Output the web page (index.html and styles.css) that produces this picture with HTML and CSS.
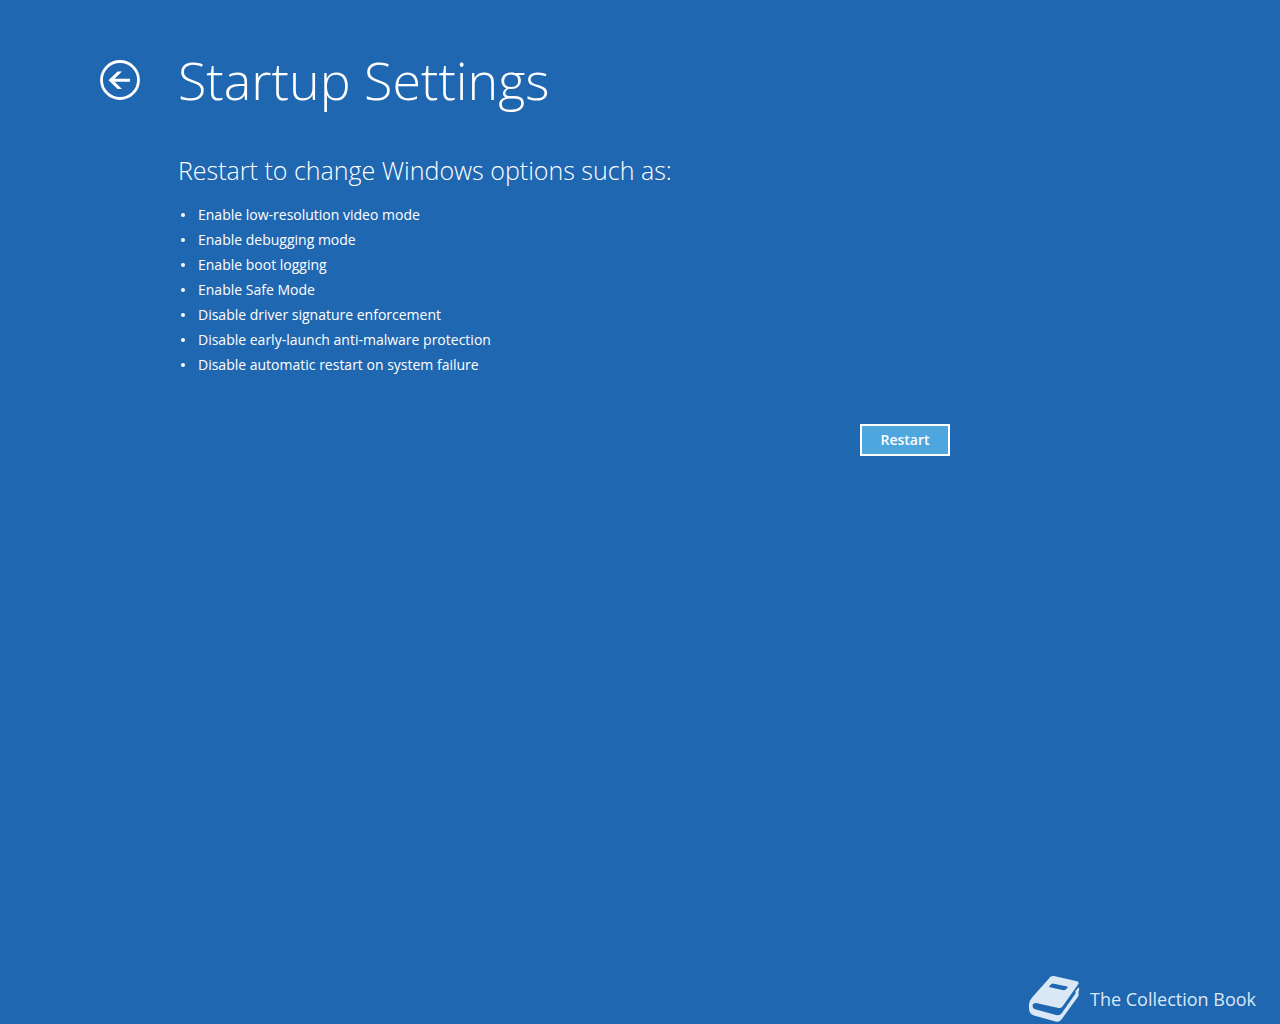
FILE: index.html
```
<!DOCTYPE html>
<html lang="en">
<head>
    <meta charset="UTF-8">
    <meta name="viewport" content="width=device-width, initial-scale=1.0">
    <title>Startup Settings</title>
    <link rel="stylesheet" href="styles.css">
</head>
<body>
    <main class="screen">
        <button class="back-btn" type="button" aria-label="Back">
            <svg viewBox="0 0 40 40" width="40" height="40" aria-hidden="true">
                <circle cx="20" cy="20" r="18.5" fill="none" stroke="#fff" stroke-width="2.8"/>
                <path d="M8.5 20.2 17.6 11.4H22L14.600 18.700H30V21.700H14.600L22 29H17.6Z" fill="#fff"/>
            </svg>
        </button>
        <h1 class="title">Startup Settings</h1>
        <div class="content">
            <h2 class="subtitle">Restart to change Windows options such as:</h2>
            <ul class="options">
                <li>Enable low-resolution video mode</li>
                <li>Enable debugging mode</li>
                <li>Enable boot logging</li>
                <li>Enable Safe Mode</li>
                <li>Disable driver signature enforcement</li>
                <li>Disable early-launch anti-malware protection</li>
                <li>Disable automatic restart on system failure</li>
            </ul>
            <div class="actions">
                <button class="restart-btn" type="button">Restart</button>
            </div>
        </div>
    </main>
    <footer class="brand">
        <svg viewBox="0 0 52 48" width="52" height="48" aria-hidden="true">
            <path fill="#dae7f5" fill-rule="evenodd" d="M22.5 1.8Q24 .6 26 1.100L49 6.300Q51.500 7 50 9.500L34.500 31.500Q33 33.500 30.500 33L8 28Q4.500 28 4.600 31Q4.700 33.500 8 34.500L28 40Q31.500 41 33.500 38.500L47.500 18.500V16L50.500 12.500Q52 14 50.500 16.500V21L33.500 44.500Q31 47.500 27.500 46.500L6 40.500Q1 39 1 33V29.500Q1 26 4 22.500ZM23.500 9 21.300 11Q20.800 12 22 12.300L35.500 15.300Q37 15.500 38 14.300L39.500 12.800Q40.200 11.800 39 11.500L26 8.700Q24.500 8.300 23.500 9Z"/>
        </svg>
        <span>The Collection Book</span>
    </footer>
</body>
</html>
```
FILE: styles.css
```
* {
    box-sizing: border-box;
}

body {
    display: flex;
    flex-direction: column;
    min-height: 100vh;
    margin: 0;
    background-color: #1f67b1;
    color: white;
    font-family: "Open Sans", "Noto Sans", sans-serif;
}

.screen {
    display: grid;
    grid-template-columns: 40px minmax(0, 772px);
    column-gap: 38px;
    align-items: center;
    padding: 44px 24px 24px 100px;
}

.back-btn {
    display: block;
    width: 40px;
    height: 40px;
    padding: 0;
    border: none;
    background: none;
    cursor: pointer;
}

.back-btn svg {
    display: block;
}

.title {
    margin: 0;
    font-size: 52px;
    font-weight: 300;
    line-height: 72px;
}

.content {
    grid-column: 2;
}

.subtitle {
    margin: 36px 0 14px;
    font-size: 25px;
    font-weight: 300;
    line-height: 36px;
}

.options {
    margin: 0;
    padding: 0;
    list-style: none;
    font-size: 14px;
    line-height: 25px;
}

.options li {
    display: flex;
    align-items: center;
    gap: 13px;
    padding-left: 3px;
}

.options li::before {
    content: "";
    width: 4px;
    height: 4px;
    border-radius: 50%;
    background-color: white;
}

.actions {
    display: flex;
    justify-content: flex-end;
    margin-top: 47px;
}

.restart-btn {
    min-width: 90px;
    height: 32px;
    padding: 0 16px 2px;
    border: 2px solid white;
    background-color: #4ea6de;
    color: white;
    font-family: inherit;
    font-size: 14px;
    font-weight: 600;
    cursor: pointer;
}

.restart-btn:hover {
    background-color: #6bb6e5;
}

.brand {
    display: flex;
    justify-content: flex-end;
    align-items: center;
    gap: 10px;
    margin-top: auto;
    padding: 0 24px 1px;
    color: #dae7f5;
    font-size: 18px;
    line-height: 24px;
}
```
